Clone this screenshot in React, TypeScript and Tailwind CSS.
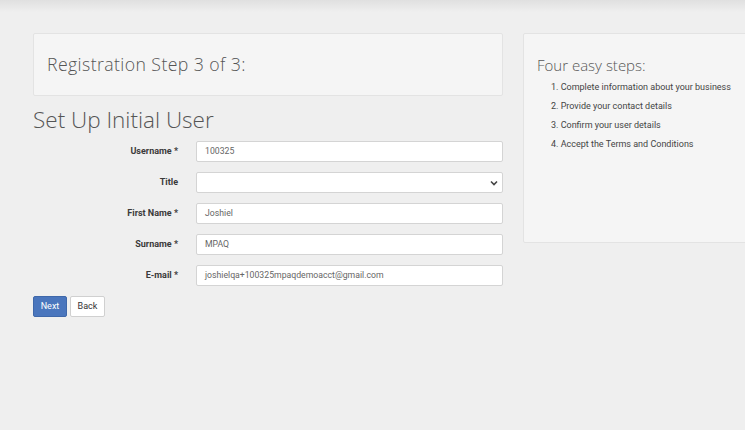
import React from "react";

const rows: { label: string; value: string; select?: boolean }[] = [
  { label: "Username *", value: "100325" },
  { label: "Title", value: "", select: true },
  { label: "First Name *", value: "Joshiel" },
  { label: "Surname *", value: "MPAQ" },
  { label: "E-mail *", value: "joshielqa+100325mpaqdemoacct@gmail.com" },
];

const steps = [
  "1. Complete information about your business",
  "2. Provide your contact details",
  "3. Confirm your user details",
  "4. Accept the Terms and Conditions",
];

export default function App() {
  return (
    <div className="relative w-full h-[430px] overflow-hidden bg-[#efefef]">
      <div className="absolute left-0 top-0 w-full h-[12px] bg-gradient-to-b from-[#e0e0e0] to-[#efefef]" />
      <div className="relative flex gap-[20px] pt-[33px] pl-[33px]">
        <div className="w-[470px] shrink-0">
          <div className="h-[63px] flex items-center pl-[13px] bg-[#f5f5f5] border border-[#e3e3e3] rounded-[2px]">
            <span
              className="text-[17.7px] tracking-[0.4px] font-light text-[#555]"
              style={{ fontFamily: '"Open Sans", sans-serif' }}
            >
              Registration Step 3 of 3:
            </span>
          </div>
          <h1
            className="mt-[9px] text-[22.5px] leading-[30px] font-light text-[#555]"
            style={{ fontFamily: '"Open Sans", sans-serif' }}
          >
            Set Up Initial User
          </h1>
          <div className="mt-[6px] flex flex-col gap-[10px]" style={{ fontFamily: "Roboto, sans-serif" }}>
            {rows.map((r) => (
              <div key={r.label} className="flex items-center gap-[18px]">
                <div className="w-[145px] text-right text-[9px] font-bold text-[#3a3a3a]">{r.label}</div>
                <div className="relative w-[307px] h-[21px] bg-white border border-[#d4d4d4] rounded-[2px] flex items-center pl-[8px] text-[8.7px] text-[#666]">
                  {r.value}
                  {r.select && (
                    <svg className="absolute right-[4px] top-[7px]" width="8" height="6" viewBox="0 0 8 6">
                      <path d="M1 1.5 L4 4.5 L7 1.5" fill="none" stroke="#444" strokeWidth="1.6" />
                    </svg>
                  )}
                </div>
              </div>
            ))}
          </div>
          <div className="mt-[10px] flex gap-[3px]" style={{ fontFamily: "Roboto, sans-serif" }}>
            <div className="w-[34px] h-[21px] rounded-[2px] bg-[#4a76bd] border border-[#3f68aa] text-white text-[9px] flex items-center justify-center">
              Next
            </div>
            <div className="w-[35px] h-[21px] rounded-[2px] bg-white border border-[#d0d0d0] text-[#333] text-[9px] flex items-center justify-center">
              Back
            </div>
          </div>
        </div>
        <div className="w-[260px] shrink-0 h-[210px] bg-[#f5f5f5] border border-[#e3e3e3] rounded-[2px] pl-[13px] pt-[21px]">
          <div className="text-[15px] leading-[21px] font-light text-[#555]" style={{ fontFamily: '"Open Sans", sans-serif' }}>
            Four easy steps:
          </div>
          <ul className="pl-[14px] mt-[2px]" style={{ fontFamily: "Roboto, sans-serif" }}>
            {steps.map((s) => (
              <li key={s} className="text-[9px] leading-[19px] text-[#444]">
                {s}
              </li>
            ))}
          </ul>
        </div>
      </div>
    </div>
  );
}
